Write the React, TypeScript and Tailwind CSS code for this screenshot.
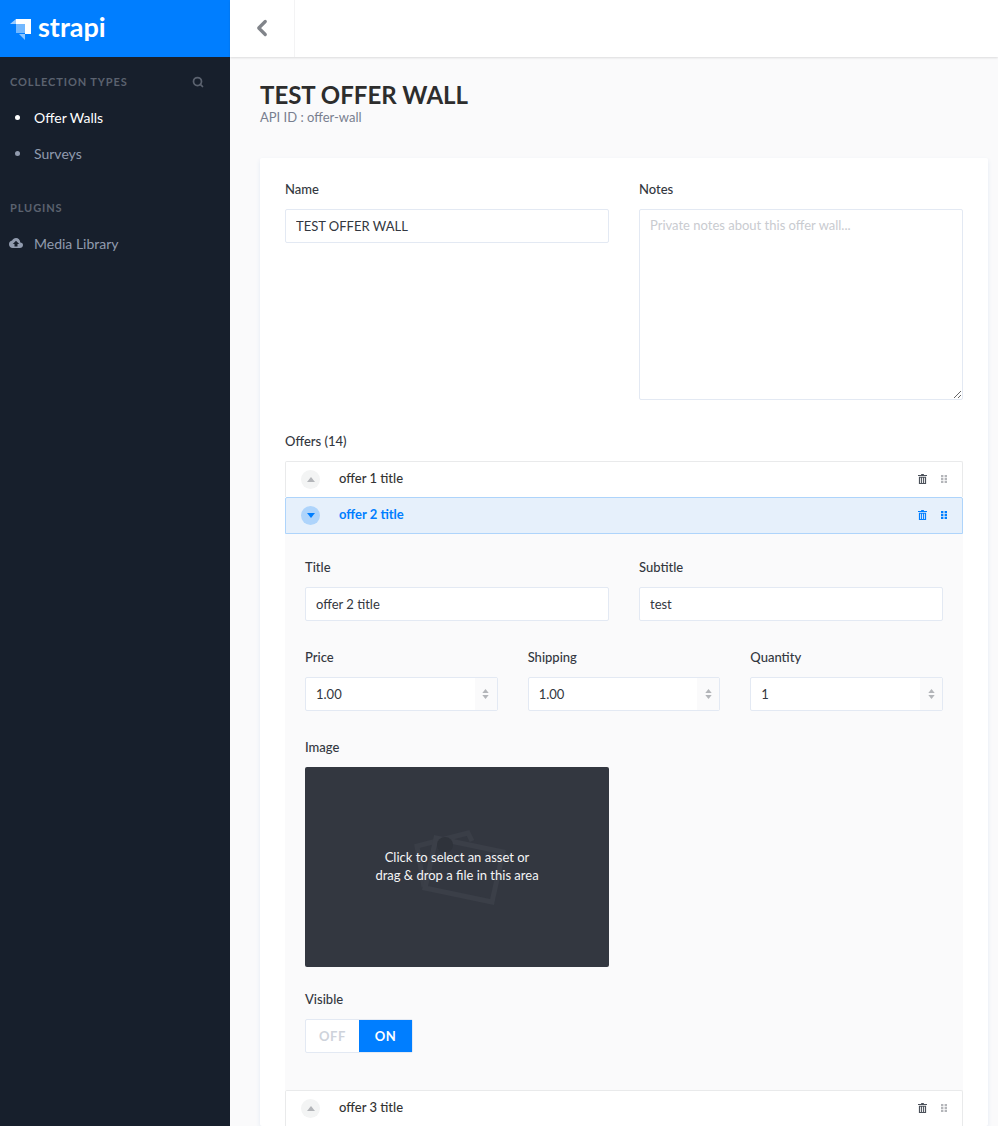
import { ReactNode } from 'react';
import { ChevronLeft, Search } from 'lucide-react';

const font = { fontFamily: 'Lato, sans-serif' };

const Label = ({ children }: { children: ReactNode }) => (
  <div className="text-[13px] leading-4 font-medium text-[#333740] mb-[12px]">{children}</div>
);

const TextField = ({ value }: { value: string }) => (
  <input
    readOnly
    value={value}
    className="w-full h-[34px] px-[10px] bg-white border border-[#e3e9f3] rounded-[2px] text-[13px] text-[#333740] outline-none"
  />
);

const NumberField = ({ value }: { value: string }) => (
  <div className="flex h-[34px] bg-white border border-[#e3e9f3] rounded-[2px] text-[13px] text-[#333740]">
    <div className="flex-1 flex items-center px-[10px] pt-[2px]">{value}</div>
    <div className="w-[22px] flex flex-col items-center justify-center gap-[2px] bg-[#fafafb]">
      <svg width="7" height="4" viewBox="0 0 8 5"><path d="M4 0l4 5H0z" fill="#b3b5b9" /></svg>
      <svg width="7" height="4" viewBox="0 0 8 5"><path d="M4 5L0 0h8z" fill="#b3b5b9" /></svg>
    </div>
  </div>
);

const Trash = ({ color }: { color: string }) => (
  <svg width="9" height="10" viewBox="0 0 10 11">
    <path d="M3.5 0h3v1H10v1.2H0V1h3.5z" fill={color} />
    <path d="M1 3h8v8H1zM2.400 4v6h1V4zm2.100 0v6h1V4zm2.100 0v6h1V4z" fill={color} fillRule="evenodd" />
  </svg>
);

const Grip = ({ color }: { color: string }) => (
  <svg width="6" height="8" viewBox="0 0 6 8" fill={color}>
    <rect width="2.4" height="2.2" />
    <rect x="3.6" width="2.4" height="2.2" />
    <rect y="2.9" width="2.4" height="2.2" />
    <rect x="3.6" y="2.9" width="2.4" height="2.2" />
    <rect y="5.8" width="2.4" height="2.2" />
    <rect x="3.6" y="5.8" width="2.4" height="2.2" />
  </svg>
);

const OfferRow = ({ title, active }: { title: string; active?: boolean }) => (
  <div
    className={`flex items-center pl-[15px] pr-[15px] border text-[13px] rounded-t-[2px] ${
      active
        ? 'h-[37px] pb-[1px] font-bold bg-[#e6f0fb] border-[#aed4fb] text-[#007eff]'
        : 'h-[36px] pb-[1px] font-medium bg-white border-[#e9eaeb] border-b-0 text-[#333333]'
    }`}
  >
    <div
      className={`w-[19px] h-[19px] rounded-full flex items-center justify-center mr-[19px] ${
        active ? 'bg-[#aed4fb]' : 'bg-[#f3f4f4]'
      }`}
    >
      {active ? (
        <svg width="8" height="5" viewBox="0 0 8 5"><path d="M4 5L0 0h8z" fill="#007eff" /></svg>
      ) : (
        <svg width="8" height="5" viewBox="0 0 8 5"><path d="M4 0l4 5H0z" fill="#b3b5b9" /></svg>
      )}
    </div>
    <span className="flex-1">{title}</span>
    <div className="flex items-center gap-[14px]">
      <Trash color={active ? '#007eff' : '#4b515a'} />
      <Grip color={active ? '#007eff' : '#b3b5b9'} />
    </div>
  </div>
);

export default function App() {
  return (
    <div style={font} className="flex h-screen overflow-hidden bg-[#fafafb]">
      {/* Sidebar */}
      <aside className="w-[230px] shrink-0 bg-[#171f2c]">
        <div className="h-[57px] bg-[#007eff] flex items-center pl-[10px] pb-[5px]">
          <svg width="21" height="22" viewBox="0 0 21 22" className="self-start mt-[18px] mr-[7px]">
            <path d="M6 1H21V16H15V6H6z" fill="#fff" />
            <path d="M6 6H15V15H6z" fill="#fff" fillOpacity="0.45" />
            <path d="M6 1V6H0z" fill="#fff" fillOpacity="0.6" />
            <path d="M15 16V22L9 16z" fill="#fff" fillOpacity="0.55" />
          </svg>
          <span className="text-[27px] leading-none font-bold text-white">strapi</span>
        </div>
        <div className="flex items-center justify-between pl-[10px] pr-[26px] pt-[8px] h-[42px] text-[11px] font-bold tracking-[0.9px] text-[#5b626f]">
          <span>COLLECTION TYPES</span>
          <Search size={12} strokeWidth={3.5} color="#5b626f" />
        </div>
        <nav>
          <div className="flex items-center h-[36px] text-[14px] text-white">
            <span className="w-[34px] flex justify-center"><span className="w-[5px] h-[5px] rounded-full bg-white" /></span>
            Offer Walls
          </div>
          <div className="flex items-center h-[36px] text-[14px] text-[#919bae]">
            <span className="w-[34px] flex justify-center"><span className="w-[5px] h-[5px] rounded-full bg-[#919bae]" /></span>
            Surveys
          </div>
        </nav>
        <div className="pl-[10px] pt-[29px] text-[11px] leading-[16px] font-bold tracking-[0.9px] text-[#5b626f]">PLUGINS</div>
        <div className="flex items-center h-[36px] mt-[9px] text-[14px] text-[#919bae]">
          <span className="w-[34px] pl-[9px]">
            <svg width="14" height="11" viewBox="0 0 14 11">
              <path
                d="M11.3 4.600C11.2 2 9.300 0 7 0 5.300 0 3.800 1 3.100 2.600 1.300 2.800 0 4.400 0 6.300 0 8.400 1.600 10 3.600 10h7.200C12.600 10 14 8.600 14 6.900c0-1.500-1.200-2.200-2.700-2.300zM8.500 6v2.500h-3V6H3.800L7 2.700 10.200 6z"
                fill="#919bae"
                fillRule="evenodd"
              />
            </svg>
          </span>
          Media Library
        </div>
      </aside>

      {/* Main */}
      <div className="flex-1 min-w-0">
        <header className="h-[57px] bg-white flex shadow-[0_1px_2px_rgba(0,0,0,0.12)]">
          <div className="w-[65px] flex items-center justify-center border-r border-[#f3f3f4]">
            <ChevronLeft size={26} strokeWidth={3} color="#81848a" className="mb-[1px]" />
          </div>
        </header>

        <div className="pl-[30px] pr-[10px]">
          <h1 className="mt-[23px] text-[24px] leading-[29px] font-bold text-[#2d2d2d]">TEST OFFER WALL</h1>
          <p className="text-[13px] leading-[16px] text-[#787e8f]">API ID : offer-wall</p>

          <div className="mt-[33px] bg-white rounded-[2px] px-[25px] pt-[23px] shadow-[0_2px_4px_#e3e9f3]">
            <div className="grid grid-cols-2 gap-x-[30px]">
              <div>
                <Label>Name</Label>
                <TextField value="TEST OFFER WALL" />
              </div>
              <div>
                <Label>Notes</Label>
                <textarea
                  readOnly
                  placeholder="Private notes about this offer wall..."
                  className="block w-full h-[191px] px-[10px] py-[6px] border border-[#e3e9f3] rounded-[2px] text-[13px] outline-none placeholder:text-[#c9cbd0]"
                />
              </div>
            </div>

            <div className="mt-[33px] text-[13px] leading-4 font-medium text-[#333740] mb-[12px]">Offers (14)</div>

            <OfferRow title="offer 1 title" />
            <OfferRow title="offer 2 title" active />

            <div className="bg-[#fafafb] px-[20px] pt-[25px] h-[556px]">
              <div className="grid grid-cols-2 gap-x-[30px]">
                <div>
                  <Label>Title</Label>
                  <TextField value="offer 2 title" />
                </div>
                <div>
                  <Label>Subtitle</Label>
                  <TextField value="test" />
                </div>
              </div>

              <div className="grid grid-cols-3 gap-x-[30px] mt-[28px]">
                <div>
                  <Label>Price</Label>
                  <NumberField value="1.00" />
                </div>
                <div>
                  <Label>Shipping</Label>
                  <NumberField value="1.00" />
                </div>
                <div>
                  <Label>Quantity</Label>
                  <NumberField value="1" />
                </div>
              </div>

              <div className="mt-[28px]">
                <Label>Image</Label>
                <div className="relative w-[304px] h-[200px] bg-[#333740] rounded-[2px] flex items-center justify-center">
                  <svg width="100" height="80" viewBox="0 0 100 80" className="absolute left-[105px] top-[60px]" fill="none">
                    <path d="M14 60L7 19L58 6L62 14" stroke="#3a3e47" strokeWidth="5" />
                    <path d="M26 11L93 25L82 75L15 61z" stroke="#3b3f48" strokeWidth="5" />
                    <circle cx="35" cy="18" r="8" fill="#2f333b" />
                  </svg>
                  <p className="relative text-center text-[13px] leading-[18px] text-[#f5f5f6] mb-[3px]">
                    Click to select an asset or
                    <br />
                    drag &amp; drop a file in this area
                  </p>
                </div>
              </div>

              <div className="mt-[24px]">
                <Label>Visible</Label>
                <div className="flex w-[108px] h-[34px] border border-[#e3e9f3] rounded-[2px] text-[13px] font-bold tracking-[0.6px] bg-white">
                  <div className="w-[53px] flex items-center justify-center pt-[2px] text-[#ced3db]">OFF</div>
                  <div className="flex-1 flex items-center justify-center pt-[2px] bg-[#007eff] text-white">ON</div>
                </div>
              </div>
            </div>

            <OfferRow title="offer 3 title" />
          </div>
        </div>
      </div>
    </div>
  );
}
